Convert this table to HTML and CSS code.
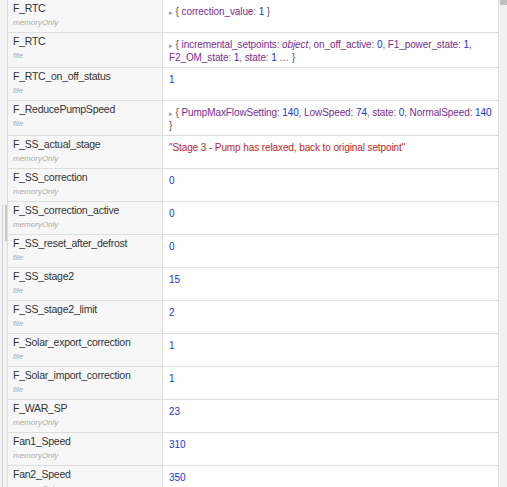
FILE: index.html
```html
<!DOCTYPE html>
<html>
<head>
<meta charset="utf-8">
<link rel="stylesheet" href="styles.css">
</head>
<body>
<div class="panel">
  <div class="gutter"><div class="gutter-line"><div class="gutter-thumb"></div></div></div>
  <div class="table">
    <div class="row"><div class="key"><div class="name">F_RTC</div><div class="store">memoryOnly</div></div><div class="val"><span class="arrow">▸</span> <span class="brace">{</span> <span class="okey">correction_value</span>: <span class="num">1</span> <span class="brace">}</span></div></div>
    <div class="row tall"><div class="key"><div class="name">F_RTC</div><div class="store">file</div></div><div class="val"><span class="arrow">▸</span> <span class="brace">{</span> <span class="okey">incremental_setpoints</span>: <span class="meta">object</span>, <span class="okey">on_off_active</span>: <span class="num">0</span>, <span class="okey">F1_power_state</span>: <span class="num">1</span>, <span class="okey">F2_OM_state</span>: <span class="num">1</span>, <span class="okey">state</span>: <span class="num">1</span> … <span class="brace">}</span></div></div>
    <div class="row"><div class="key"><div class="name">F_RTC_on_off_status</div><div class="store">file</div></div><div class="val"><span class="num">1</span></div></div>
    <div class="row tall"><div class="key"><div class="name">F_ReducePumpSpeed</div><div class="store">file</div></div><div class="val"><span class="arrow">▸</span> <span class="brace">{</span> <span class="okey">PumpMaxFlowSetting</span>: <span class="num">140</span>, <span class="okey">LowSpeed</span>: <span class="num">74</span>, <span class="okey">state</span>: <span class="num">0</span>, <span class="okey">NormalSpeed</span>: <span class="num">140</span> <span class="brace">}</span></div></div>
    <div class="row"><div class="key"><div class="name">F_SS_actual_stage</div><div class="store">memoryOnly</div></div><div class="val"><span class="str">"Stage 3 - Pump has relaxed, back to original setpoint"</span></div></div>
    <div class="row"><div class="key"><div class="name">F_SS_correction</div><div class="store">memoryOnly</div></div><div class="val"><span class="num">0</span></div></div>
    <div class="row"><div class="key"><div class="name">F_SS_correction_active</div><div class="store">memoryOnly</div></div><div class="val"><span class="num">0</span></div></div>
    <div class="row"><div class="key"><div class="name">F_SS_reset_after_defrost</div><div class="store">file</div></div><div class="val"><span class="num">0</span></div></div>
    <div class="row"><div class="key"><div class="name">F_SS_stage2</div><div class="store">file</div></div><div class="val"><span class="num">15</span></div></div>
    <div class="row"><div class="key"><div class="name">F_SS_stage2_limit</div><div class="store">file</div></div><div class="val"><span class="num">2</span></div></div>
    <div class="row"><div class="key"><div class="name">F_Solar_export_correction</div><div class="store">file</div></div><div class="val"><span class="num">1</span></div></div>
    <div class="row"><div class="key"><div class="name">F_Solar_import_correction</div><div class="store">file</div></div><div class="val"><span class="num">1</span></div></div>
    <div class="row"><div class="key"><div class="name">F_WAR_SP</div><div class="store">memoryOnly</div></div><div class="val"><span class="num">23</span></div></div>
    <div class="row"><div class="key"><div class="name">Fan1_Speed</div><div class="store">memoryOnly</div></div><div class="val"><span class="num">310</span></div></div>
    <div class="row"><div class="key"><div class="name">Fan2_Speed</div><div class="store">memoryOnly</div></div><div class="val"><span class="num">350</span></div></div>
  </div>
  <div class="scrollbar"><div class="thumb"></div></div>
</div>
</body>
</html>
```

FILE: styles.css
```css
html, body {
  margin: 0;
  padding: 0;
  background: #f3f3f3;
  font-family: "Liberation Sans", Arial, sans-serif;
}
.panel {
  display: flex;
  height: 487px;
  overflow: hidden;
}
.gutter {
  width: 8px;
  flex: none;
  padding-left: 2px;
  box-sizing: border-box;
  border-right: 1px solid #dcdcdc;
  background: #f3f3f3;
}
.gutter-line {
  height: 100%;
  border-left: 1px solid #cfcfcf;
}
.gutter-thumb {
  margin-top: 205px;
  margin-left: 2px;
  width: 2px;
  height: 36px;
  background: #c8c8c8;
}
.table {
  width: 490px;
  flex: none;
  border-right: 1px solid #e0e0e0;
  margin-top: -1px;
}
.row {
  display: flex;
  border-top: 1px solid #dedede;
  min-height: 32px;
}
.key {
  width: 155px;
  flex: none;
  box-sizing: border-box;
  padding: 1px 4px 0 5px;
  background: #f7f7f7;
  border-right: 1px solid #dedede;
}
.name {
  font-size: 10.5px;
  letter-spacing: -0.25px;
  line-height: 15px;
  color: #333;
  white-space: nowrap;
}
.store {
  font-size: 8px;
  line-height: 14px;
  font-style: italic;
  color: #aaa;
}
.val {
  flex: 1;
  background: #fff;
  padding: 6px 6px 3px 6px;
  font-size: 10px;
  letter-spacing: -0.1px;
  line-height: 12px;
  color: #666;
}
.arrow {
  color: #999;
  font-size: 7px;
}
.brace { color: #555; }
.okey { color: #792e90; }
.meta { color: #792e90; font-style: italic; }
.num { color: #2033d6; }
.str { color: #b72828; }
.scrollbar {
  flex: 1;
  background: #f1f1f1;
}
.thumb {
  height: 5px;
  margin-left: 1px;
  background: #c1c1c1;
}
```
